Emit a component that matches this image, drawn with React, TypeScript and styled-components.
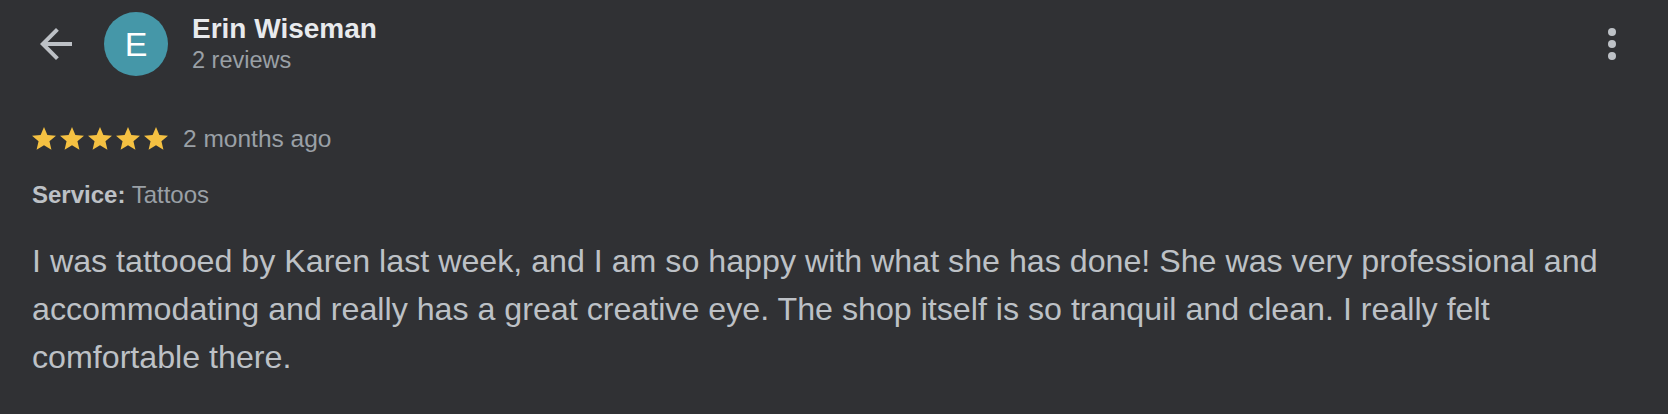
import React from "react";
import styled, { createGlobalStyle } from "styled-components";

const GlobalStyle = createGlobalStyle`
  html, body {
    margin: 0;
    padding: 0;
    background: #303134;
  }
  body {
    font-family: "Liberation Sans", Arial, Helvetica, sans-serif;
  }
`;

const Page = styled.div`
  background: #303134;
  min-height: 414px;
  box-sizing: border-box;
  padding: 12px 32px 0 32px;
  display: flex;
  flex-direction: column;
`;

const Header = styled.div`
  display: flex;
  align-items: center;
  height: 64px;
`;

const IconButton = styled.button`
  width: 48px;
  height: 48px;
  padding: 0;
  border: none;
  background: transparent;
  display: flex;
  align-items: center;
  justify-content: center;
  color: #bdc1c6;
  flex: none;
  svg {
    display: block;
  }
`;

const Avatar = styled.div`
  width: 64px;
  height: 64px;
  border-radius: 50%;
  background: #4597a8;
  color: #ffffff;
  display: flex;
  align-items: center;
  justify-content: center;
  font-size: 34px;
  line-height: 1;
  margin-left: 24px;
  flex: none;
`;

const NameBlock = styled.div`
  display: flex;
  flex-direction: column;
  margin-left: 24px;
  flex: 1;
`;

const Name = styled.div`
  font-size: 28px;
  line-height: 32px;
  font-weight: 700;
  color: #e8eaed;
`;

const Sub = styled.div`
  font-size: 23.5px;
  line-height: 30px;
  color: #9aa0a6;
`;

const RatingRow = styled.div`
  display: flex;
  align-items: center;
  margin-top: 51px;
  height: 24px;
`;

const Stars = styled.div`
  display: flex;
  gap: 4px;
  svg {
    display: block;
  }
`;

const When = styled.span`
  font-size: 24.5px;
  line-height: 24px;
  color: #9aa0a6;
  margin-left: 15px;
`;

const ServiceLine = styled.div`
  margin-top: 30px;
  font-size: 24px;
  line-height: 28px;
  color: #9aa0a6;
`;

const Label = styled.span`
  font-weight: 700;
  color: #bdc1c6;
`;

const Body = styled.p`
  margin: 28px 0 0 0;
  font-size: 32.2px;
  line-height: 48px;
  color: #bdc1c6;
`;

const Star = () => (
  <svg width="24" height="24" viewBox="2 2 20 20" fill="#f5c142">
    <path d="M12 17.27L18.18 21l-1.64-7.03L22 9.24l-7.19-.61L12 2 9.19 8.63 2 9.24l5.46 4.73L5.82 21z" />
  </svg>
);

export default function App() {
  return (
    <>
      <GlobalStyle />
      <Page>
        <Header>
          <IconButton aria-label="Back">
            <svg width="48" height="48" viewBox="0 0 24 24" fill="currentColor">
              <path d="M20 11H7.83l5.59-5.59L12 4l-8 8 8 8 1.41-1.41L7.83 13H20v-2z" />
            </svg>
          </IconButton>
          <Avatar>E</Avatar>
          <NameBlock>
            <Name>Erin Wiseman</Name>
            <Sub>2 reviews</Sub>
          </NameBlock>
          <IconButton aria-label="More">
            <svg width="48" height="48" viewBox="0 0 24 24" fill="currentColor">
              <circle cx="12" cy="6" r="2" />
              <circle cx="12" cy="12" r="2" />
              <circle cx="12" cy="18" r="2" />
            </svg>
          </IconButton>
        </Header>
        <RatingRow>
          <Stars>
            <Star />
            <Star />
            <Star />
            <Star />
            <Star />
          </Stars>
          <When>2 months ago</When>
        </RatingRow>
        <ServiceLine>
          <Label>Service:</Label> Tattoos
        </ServiceLine>
        <Body>
          I was tattooed by Karen last week, and I am so happy with what she has done! She was very
          professional and accommodating and really has a great creative eye. The shop itself is so
          tranquil and clean. I really felt comfortable there.
        </Body>
      </Page>
    </>
  );
}
